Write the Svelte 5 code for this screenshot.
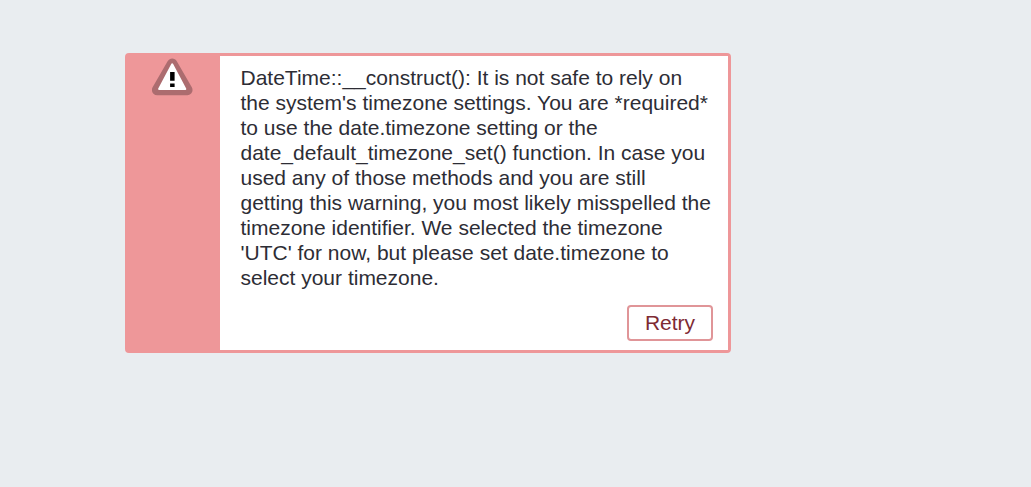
<script lang="ts">
  const lines = [
    "DateTime::__construct(): It is not safe to rely on",
    "the system's timezone settings. You are *required*",
    "to use the date.timezone setting or the",
    "date_default_timezone_set() function. In case you",
    "used any of those methods and you are still",
    "getting this warning, you most likely misspelled the",
    "timezone identifier. We selected the timezone",
    "'UTC' for now, but please set date.timezone to",
    "select your timezone.",
  ];
</script>

<main>
  <section class="alert" role="alert">
    <div class="alert-side">
      <svg class="alert-icon" viewBox="0 0 42 38" aria-hidden="true">
        <path
          d="M20.2 5.8 35.2 32H5.2Z"
          fill="#ac6c6f"
          stroke="#ac6c6f"
          stroke-width="10.6"
          stroke-linejoin="round"
        />
        <path
          d="M20.2 6.4 33.2 31H7.2Z"
          fill="#fff"
          stroke="#fff"
          stroke-width="2.2"
          stroke-linejoin="round"
        />
        <path d="M18.1 14h4.5v8.8h-4.5zM18.1 25.6h4.5v3.3h-4.5z" fill="#000" />
      </svg>
    </div>
    <div class="alert-body">
      <p class="message">
        {#each lines as line, i (i)}
          <span class="line">{line}</span>
        {/each}
      </p>
      <button type="button" class="retry">Retry</button>
    </div>
  </section>
</main>

<style>
  :global(body) {
    background: #e9edf0;
  }

  main {
    box-sizing: border-box;
    height: 487px;
    padding: 53px 0 0 125px;
    font-family: "Liberation Sans", Arial, sans-serif;
    font-size: 21px;
    overflow: hidden;
  }

  .alert {
    box-sizing: border-box;
    display: flex;
    width: 606px;
    height: 300px;
    border: 3px solid #ee9799;
    border-radius: 4px;
    background: #ee9799;
  }

  .alert-side {
    flex: none;
    display: flex;
    justify-content: center;
    align-items: flex-start;
    box-sizing: border-box;
    width: 92px;
    padding-top: 2px;
    padding-right: 2px;
  }

  .alert-icon {
    width: 42px;
    height: 38px;
  }

  .alert-body {
    flex: 1;
    display: flex;
    flex-direction: column;
    padding: 9px 15px 9px 20.5px;
    background: #fff;
  }

  .message {
    margin: 0;
    color: #2d2d35;
    line-height: 25px;
    white-space: nowrap;
  }

  .line {
    display: block;
  }

  .retry {
    box-sizing: border-box;
    align-self: flex-end;
    width: 86px;
    height: 36px;
    margin-top: auto;
    padding: 0;
    border: 2px solid #e09598;
    border-radius: 4px;
    background: #fff;
    color: #7e2a33;
    font: inherit;
  }
</style>
